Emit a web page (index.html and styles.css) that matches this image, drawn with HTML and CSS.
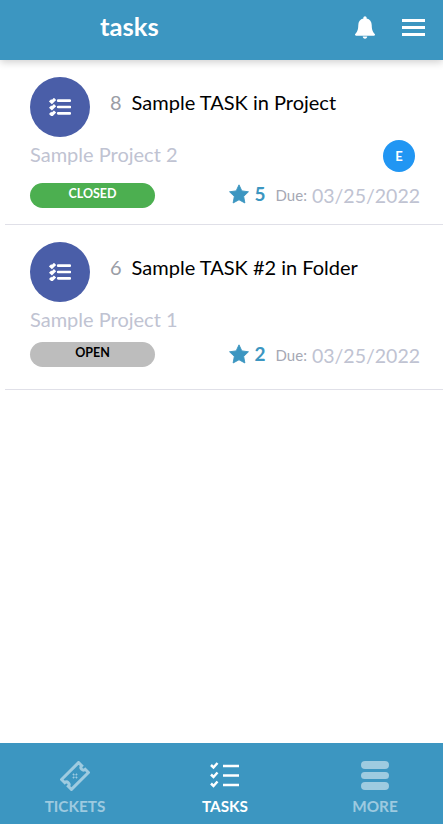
FILE: index.html
```html
<!DOCTYPE html>
<html lang="en">
<head>
<meta charset="utf-8">
<title>tasks</title>
<link rel="stylesheet" href="styles.css">
</head>
<body>
<div class="app">
  <header class="topbar">
    <h1 class="title">tasks</h1>
    <div class="top-icons">
      <svg class="bell" viewBox="0 0 22 25"><path d="M11 0c-1 0-1.800.8-1.800 1.800v.9C5.700 3.500 3.600 6.300 3.600 10c0 5.500-1.600 7.800-3.100 9.300-.4.400-.5.800-.5 1.200 0 .6.500 1 1.100 1h19.800c.6 0 1.100-.4 1.100-1 0-.4-.1-.8-.5-1.200-1.500-1.500-3.100-3.800-3.100-9.300 0-3.700-2.100-6.500-5.600-7.300v-.9C12.800.8 12 0 11 0zM8.500 22.500c0 1.300 1.100 2.300 2.500 2.300s2.500-1 2.500-2.300z"/></svg>
      <div class="burger"><span></span><span></span><span></span></div>
    </div>
  </header>
  <main class="list">
    <article class="task">
      <div class="task-head">
        <div class="avatar">
          <svg class="check-list" viewBox="0 0 24 20"><path class="ticks" d="M1 2.500l2 2 3.500-3.500M1 9.500l2 2 3.500-3.500M1 16.500l2 2 3.500-3.500"/><path class="lines" d="M10 3h13M10 10h13M10 17h13"/></svg>
        </div>
        <span class="num">8</span>
        <span class="name">Sample TASK in Project</span>
      </div>
      <div class="project-row">
        <span class="project">Sample Project 2</span>
        <span class="user">E</span>
      </div>
      <div class="meta-row meta-closed">
        <span class="status closed">CLOSED</span>
        <div class="meta">
          <svg class="star" viewBox="0 0 24 24"><path stroke-linejoin="round" d="M12 2l3.100 6.600 7.200 1-5.200 5 1.300 7.200-6.400-3.500-6.400 3.500 1.300-7.200-5.200-5 7.200-1z"/></svg>
          <span class="score">5</span>
          <span class="due-label">Due:</span>
          <span class="due">03/25/2022</span>
        </div>
      </div>
    </article>
    <article class="task">
      <div class="task-head">
        <div class="avatar">
          <svg class="check-list" viewBox="0 0 24 20"><path class="ticks" d="M1 2.500l2 2 3.500-3.500M1 9.500l2 2 3.500-3.500M1 16.500l2 2 3.500-3.500"/><path class="lines" d="M10 3h13M10 10h13M10 17h13"/></svg>
        </div>
        <span class="num">6</span>
        <span class="name">Sample TASK #2 in Folder</span>
      </div>
      <div class="project-row">
        <span class="project">Sample Project 1</span>
      </div>
      <div class="meta-row">
        <span class="status open">OPEN</span>
        <div class="meta">
          <svg class="star" viewBox="0 0 24 24"><path stroke-linejoin="round" d="M12 2l3.100 6.600 7.200 1-5.200 5 1.300 7.200-6.400-3.500-6.400 3.500 1.300-7.200-5.200-5 7.200-1z"/></svg>
          <span class="score">2</span>
          <span class="due-label">Due:</span>
          <span class="due">03/25/2022</span>
        </div>
      </div>
    </article>
  </main>
  <nav class="tabbar">
    <div class="tab">
      <svg class="tab-icon" viewBox="0 0 30 30"><g transform="rotate(-45 15 15)"><path class="ticket" d="M3 8h24v4.500a2.500 2.500 0 0 0 0 5V22H3v-4.500a2.500 2.500 0 0 0 0-5z"/><path class="ticket-dash" d="M15 12v6M12 15h6"/></g></svg>
      <span class="tab-label">TICKETS</span>
    </div>
    <div class="tab active">
      <svg class="tab-icon" viewBox="0 0 30 30"><path class="tab-ticks" d="M1 4l2.500 2.500 4-4.500M1 13.500l2.500 2.500 4-4.500M1 22.500l2.500 2.500 4-4.500"/><path class="tab-lines" d="M13 5h16M13 14.500h16M13 24h16"/></svg>
      <span class="tab-label">TASKS</span>
    </div>
    <div class="tab">
      <div class="more-icon"><span></span><span></span><span></span></div>
      <span class="tab-label">MORE</span>
    </div>
  </nav>
</div>
</body>
</html>
```
FILE: styles.css
```css
* { box-sizing: border-box; }
html, body { margin: 0; padding: 0; height: 100%; }
body { font-family: Lato, "Open Sans", sans-serif; background: #fff; overflow: hidden; }
.app { display: flex; flex-direction: column; height: 824px; }
.topbar {
  height: 60px; background: #3c96c1; display: flex; align-items: center;
  justify-content: space-between; padding: 0 18px 6px 100px;
  box-shadow: 0 2px 8px rgba(0,0,0,.2); position: relative; z-index: 1; flex: none;
}
.title { margin: 0; font-size: 25.6px; font-weight: 700; color: #fff; line-height: 1; }
.top-icons { display: flex; align-items: center; gap: 27px; }
.bell { width: 20px; height: 25px; fill: #fff; display: block; }
.burger { display: flex; flex-direction: column; gap: 4px; width: 23px; }
.burger span { display: block; height: 3px; background: #fff; }
.list { flex: 1; padding: 0 0 0 5px; }
.task { height: 165px; padding: 17px 23px 0 25px; border-bottom: 1px solid #e0e0e8; }
.task-head { display: flex; align-items: center; height: 60px; }
.avatar {
  width: 60px; height: 60px; border-radius: 50%; background: #4a5ea8;
  display: flex; align-items: center; justify-content: center; flex: none;
}
.check-list { width: 22px; height: 18px; display: block; }
.ticks { fill: none; stroke: #fff; stroke-width: 3.500; }
.lines { fill: none; stroke: #fff; stroke-width: 3; stroke-linecap: round; }
.num { font-size: 20px; color: #9a9da6; margin-left: 20px; position: relative; top: -5px; }
.name { font-size: 20px; color: #000; margin-left: 10px; position: relative; top: -5px; }
.project-row { display: flex; justify-content: space-between; align-items: center; height: 36px; margin-top: 1px; padding-right: 5px; }
.project { font-size: 20px; color: #c0c3d2; position: relative; top: -2px; }
.user {
  width: 32px; height: 32px; border-radius: 50%; background: #2196f3; color: #fff;
  font-size: 13px; font-weight: 700; display: flex; align-items: center; justify-content: center;
}
.meta-row { display: flex; justify-content: space-between; align-items: center; height: 32px; }
.meta-closed { margin-top: 5px; }
.status {
  width: 125px; height: 25px; border-radius: 13px; font-size: 12.500px; font-weight: 700;
  display: flex; justify-content: center; line-height: 22px; position: relative; top: -1px;
}
.meta-closed .status { top: 0; }
.closed { background: #4caf50; color: #fff; }
.open { background: #bdbdbd; color: #000; }
.meta { display: flex; align-items: center; }
.star { width: 22px; height: 22px; fill: #3c96c1; stroke: #3c96c1; stroke-width: 1; display: block; position: relative; top: -1px; }
.score { font-size: 19px; font-weight: 700; color: #3c96c1; margin-left: 5px; position: relative; top: -2px; }
.due-label { font-size: 15px; color: #a5a8b4; margin-left: 10px; }
.due { font-size: 19.500px; color: #c0c3d2; margin-left: 5px; }
.tabbar { height: 81px; background: #3c96c1; display: flex; flex: none; }
.tab { flex: 0 0 150px; display: flex; flex-direction: column; align-items: center; padding-top: 18px; color: rgba(255,255,255,.5); }
.tab.active { color: #fff; }
.tab-icon { width: 30px; height: 30px; display: block; }
.ticket { fill: none; stroke: rgba(255,255,255,.5); stroke-width: 3; }
.ticket-dash { fill: none; stroke: rgba(255,255,255,.5); stroke-width: 1.500; stroke-dasharray: 2 2; }
.tab-ticks { fill: none; stroke: #fff; stroke-width: 2.500; }
.tab-lines { fill: none; stroke: #fff; stroke-width: 2.500; }
.more-icon { width: 28px; height: 30px; display: flex; flex-direction: column; gap: 3px; }
.more-icon span { height: 7.500px; border-radius: 4px; background: rgba(255,255,255,.5); }
.tab-label { font-size: 15.300px; font-weight: 700; margin-top: 5px; line-height: 20px; }
```
